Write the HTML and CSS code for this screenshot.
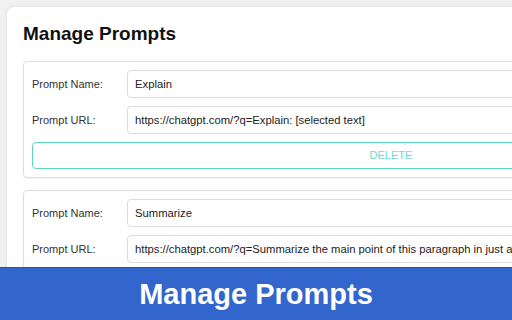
FILE: index.html
```html
<!DOCTYPE html>
<html>
<head>
<meta charset="utf-8">
<link rel="stylesheet" href="styles.css">
</head>
<body>
<div class="panel">
  <h1 class="title">Manage Prompts</h1>
  <div class="card">
    <div class="row">
      <label class="label">Prompt Name:</label>
      <div class="input">Explain</div>
    </div>
    <div class="row">
      <label class="label">Prompt URL:</label>
      <div class="input">https://chatgpt.com/?q=Explain: [selected text]</div>
    </div>
    <div class="btn">DELETE</div>
  </div>
  <div class="card">
    <div class="row">
      <label class="label">Prompt Name:</label>
      <div class="input">Summarize</div>
    </div>
    <div class="row">
      <label class="label">Prompt URL:</label>
      <div class="input">https://chatgpt.com/?q=Summarize the main point of this paragraph in just a few words: [selected text]</div>
    </div>
    <div class="btn">DELETE</div>
  </div>
</div>
<div class="banner">Manage Prompts</div>
</body>
</html>
```
FILE: styles.css
```css
html, body {
  margin: 0;
  padding: 0;
  overflow: hidden;
}
body {
  background: #f1f1f1;
  font-family: "Liberation Sans", Arial, sans-serif;
  width: 512px;
  height: 320px;
}
.panel {
  margin: 7px 0 0 7px;
  width: 736px;
  padding: 16px;
  background: #ffffff;
  border-radius: 8px;
  box-shadow: 0 0 4px rgba(0,0,0,0.08);
  display: flex;
  flex-direction: column;
  gap: 12px;
}
.title {
  margin: 0;
  font-size: 19px;
  font-weight: bold;
  color: #111;
  line-height: 22px;
  margin-bottom: 4px;
}
.card {
  border: 1px solid #dedede;
  border-radius: 4px;
  padding: 8px;
  display: flex;
  flex-direction: column;
  gap: 8px;
  box-shadow: 0 1px 2px rgba(0,0,0,0.05);
}
.row {
  display: flex;
  align-items: center;
}
.label {
  width: 95px;
  flex: none;
  font-size: 11px;
  color: #333;
}
.input {
  flex: 1;
  height: 26px;
  line-height: 26px;
  border: 1px solid #dcdcdc;
  border-radius: 4px;
  padding: 0 7px;
  font-size: 11.25px;
  color: #222;
  white-space: nowrap;
  overflow: hidden;
}
.btn {
  height: 25px;
  line-height: 25px;
  border: 1px solid #5ad8c2;
  border-radius: 4px;
  text-align: center;
  font-size: 11px;
  color: #6bdccb;
}
.banner {
  position: fixed;
  left: 0;
  right: 0;
  bottom: 0;
  height: 52px;
  border-top: 1px solid #1e4fbf;
  background: #3366cc;
  color: #fff;
  font-size: 29px;
  font-weight: bold;
  text-align: center;
  line-height: 52px;
}
```
